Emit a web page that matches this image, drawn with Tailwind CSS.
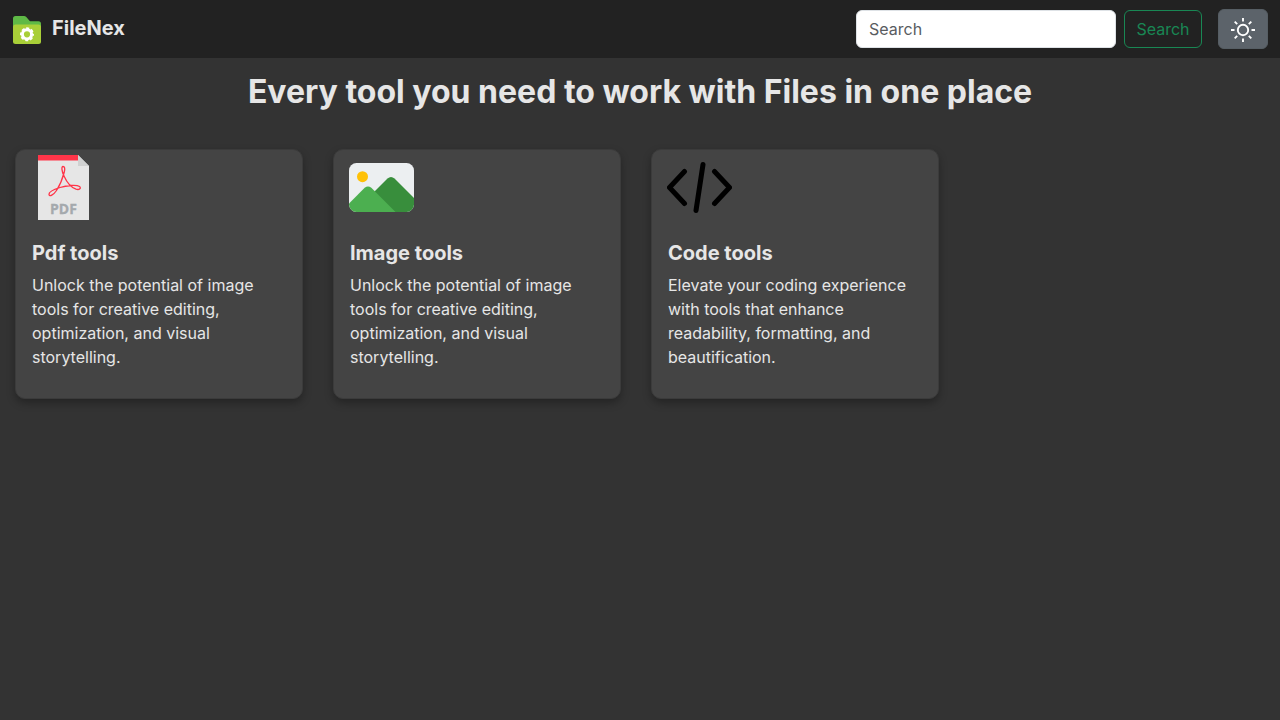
<!DOCTYPE html>
<html lang="en">
<head>
<meta charset="utf-8">
<meta name="viewport" content="width=device-width, initial-scale=1">
<title>FileNex</title>
<script src="https://cdn.jsdelivr.net/npm/@tailwindcss/browser@4"></script>
</head>
<body class="min-h-screen bg-[#333333] font-['Inter',sans-serif] text-base text-[#e6e6e6]">
<header class="flex items-center justify-between bg-[#222222] px-3 py-[9px]">
  <a href="#" class="flex items-center gap-[10px] pt-px text-xl font-bold">
    <svg class="h-[30px] w-[30px]" viewBox="0 0 30 30" aria-hidden="true">
      <path fill="#5fb946" d="M1 3.500Q1 1 3.500 1H12Q13.300 1 14.300 2L17.500 5.700Q18 6.200 19 6.200H26.500Q29 6.200 29 8.700V14H1Z"/>
      <path fill="#a9cf38" d="M1 12Q1 9.500 3.500 9.500H26.500Q29 9.500 29 12V26.500Q29 29 26.500 29H3.500Q1 29 1 26.500Z"/>
      <circle cx="15" cy="19.300" r="4.600" fill="none" stroke="#fff" stroke-width="3"/>
      <circle cx="15" cy="19.300" r="6.200" fill="none" stroke="#fff" stroke-width="1.600" stroke-dasharray="3 1.870" stroke-dashoffset="1.500"/>
    </svg>
    <span class="-mt-1">FileNex</span>
  </a>
  <div class="flex items-center gap-4">
    <form class="flex gap-2" role="search">
      <input type="search" aria-label="Search" placeholder="Search" class="h-[38px] w-[260px] rounded-md border border-[#dee2e6] bg-white px-3 text-[#212529] outline-none placeholder:text-[#595c5f]">
      <button type="button" class="h-[38px] w-[78px] rounded-md border border-[#198754] text-[#198754]">Search</button>
    </form>
    <button type="button" aria-label="Toggle theme" class="flex h-10 w-[50px] items-center justify-center rounded-md border border-[#565e64] bg-[#5c636a] text-white">
      <svg class="mt-px h-6 w-6" viewBox="0 0 24 24" fill="none" stroke="currentColor" stroke-width="1.900" aria-hidden="true">
        <circle cx="12" cy="12" r="5.200"/>
        <path d="M12 0v3.500M12 20.500V24M0 12h3.500M20.500 12H24M3.700 3.700l2.500 2.500M17.800 17.800l2.500 2.500M3.700 20.300l2.500-2.500M17.800 6.200l2.500-2.500"/>
      </svg>
    </button>
  </div>
</header>
<main>
  <h1 class="px-4 pt-[14px] text-center text-[32px] leading-10 font-bold">Every tool you need to work with Files in one place</h1>
  <div class="flex flex-wrap gap-[30px] px-[15px] pt-[37px] pb-8">
    <a href="#" class="block w-72 rounded-[10px] border border-[#3b3b3b] bg-[#444444] px-4 pt-[5px] pb-[29px] shadow-[0_4px_8px_rgba(0,0,0,0.3)]">
      <svg class="-ml-px h-[65px] w-[65px]" viewBox="0 0 65 65" aria-hidden="true">
        <path fill="#e6e6e6" d="M7 0H47L58 11V65H7Z"/>
        <path fill="#ff3549" d="M7 0H47V5.500H7Z"/>
        <path fill="#d0d1d1" d="M47 0L58 11H47Z"/>
        <path fill="none" stroke="#ff3549" stroke-width="1.300" stroke-linejoin="round" d="M32 11.500C30.300 11.500 30.600 16 33 21C35.500 26.500 40 32.500 45 34.200C48.500 35.300 50.500 33 48.500 31.500C45.500 29.500 35.500 30.500 29 32.500C23.500 34.200 17.800 37 18 39.300C18.400 42.200 22.500 40 25.500 35.500C29 30 32 22 33.300 17C34.200 13.500 33.700 11.500 32 11.500Z"/>
        <text x="32.500" y="58.500" text-anchor="middle" font-family="'Open Sans',sans-serif" font-size="14" font-weight="700" fill="#a4a9ad" stroke="#a4a9ad" stroke-width="0.300">PDF</text>
      </svg>
      <h2 class="mt-[21px] text-xl leading-6 font-bold">Pdf tools</h2>
      <p class="mt-2 leading-6">Unlock the potential of image tools for creative editing, optimization, and visual storytelling.</p>
    </a>
    <a href="#" class="block w-72 rounded-[10px] border border-[#3b3b3b] bg-[#444444] px-4 pt-[5px] pb-[29px] shadow-[0_4px_8px_rgba(0,0,0,0.3)]">
      <svg class="-ml-px h-[65px] w-[65px]" viewBox="0 0 65 65" aria-hidden="true">
        <defs><clipPath id="photo"><rect y="8" width="65" height="49" rx="7.500"/></clipPath></defs>
        <g clip-path="url(#photo)">
          <path fill="#eceff1" d="M0 8H65V57H0Z"/>
          <circle cx="13.500" cy="21.700" r="5.500" fill="#ffc107"/>
          <path fill="#388e3c" d="M20 42L38.500 23.500Q42 20.300 45.500 23.500L65 43V57H30Z"/>
          <path fill="#4caf50" d="M0 48.500L15.700 32.800Q19 30 22.300 32.800L46.500 57H0Z"/>
        </g>
      </svg>
      <h2 class="mt-[21px] text-xl leading-6 font-bold">Image tools</h2>
      <p class="mt-2 leading-6">Unlock the potential of image tools for creative editing, optimization, and visual storytelling.</p>
    </a>
    <a href="#" class="block w-72 rounded-[10px] border border-[#3b3b3b] bg-[#444444] px-4 pt-[5px] pb-[29px] shadow-[0_4px_8px_rgba(0,0,0,0.3)]">
      <svg class="-ml-px h-[65px] w-[65px]" viewBox="0 0 65 65" fill="none" stroke="#000" stroke-width="5" stroke-linecap="round" stroke-linejoin="round" aria-hidden="true">
        <path d="M17.500 16.500L2.500 32.500L17.500 48.500M47.500 16.500L62.500 32.500L47.500 48.500M36 9.500L29 55.500"/>
      </svg>
      <h2 class="mt-[21px] text-xl leading-6 font-bold">Code tools</h2>
      <p class="mt-2 leading-6">Elevate your coding experience with tools that enhance readability, formatting, and beautification.</p>
    </a>
  </div>
</main>
</body>
</html>
